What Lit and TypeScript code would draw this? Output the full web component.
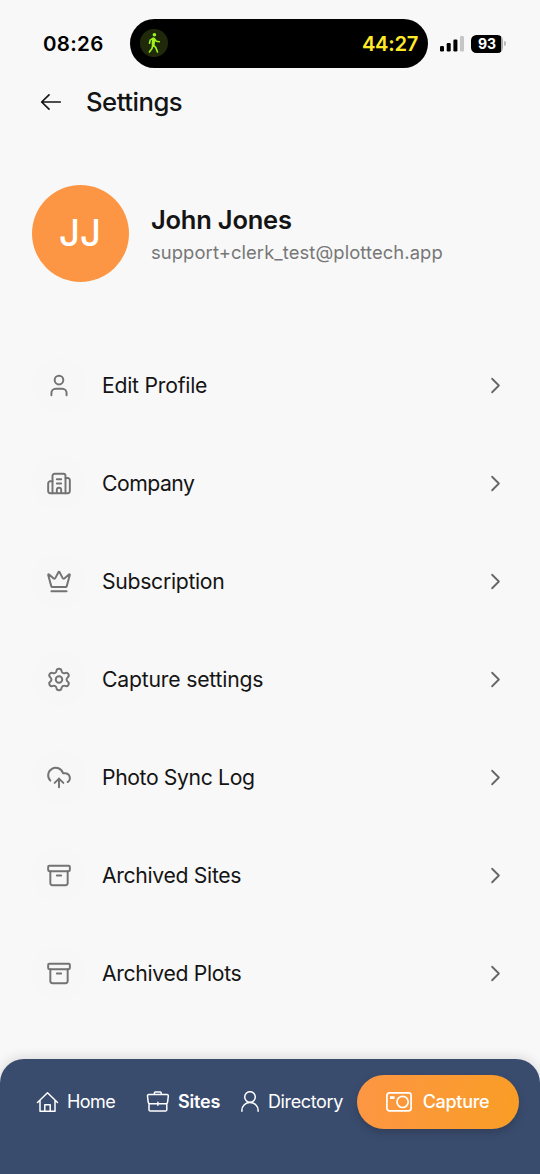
import { LitElement, html, css, svg } from "lit";
import { customElement } from "lit/decorators.js";

const icons: Record<string, unknown> = {
  user: svg`<path d="M19 21v-2a4 4 0 0 0-4-4H9a4 4 0 0 0-4 4v2"/><circle cx="12" cy="7" r="4"/>`,
  building: svg`<path d="M10 12h4M10 8h4M14 21v-3a2 2 0 0 0-4 0v3M6 10H4a2 2 0 0 0-2 2v7a2 2 0 0 0 2 2h16a2 2 0 0 0 2-2V9a2 2 0 0 0-2-2h-2"/><path d="M6 21V5a2 2 0 0 1 2-2h8a2 2 0 0 1 2 2v16"/>`,
  crown: svg`<path d="M11.562 3.266a.5.5 0 0 1 .876 0L15.39 8.87a1 1 0 0 0 1.516.294L21.183 5.5a.5.5 0 0 1 .798.519l-2.834 10.246a1 1 0 0 1-.956.734H5.81a1 1 0 0 1-.957-.734L2.02 6.02a.5.5 0 0 1 .798-.519l4.276 3.664a1 1 0 0 0 1.516-.294z"/><path d="M5 21h14"/>`,
  gear: svg`<path d="M9.671 4.136a2.34 2.34 0 0 1 4.659 0 2.34 2.34 0 0 0 3.319 1.915 2.34 2.34 0 0 1 2.33 4.033 2.34 2.34 0 0 0 0 3.831 2.34 2.34 0 0 1-2.33 4.033 2.34 2.34 0 0 0-3.319 1.915 2.34 2.34 0 0 1-4.659 0 2.34 2.34 0 0 0-3.32-1.915 2.34 2.34 0 0 1-2.33-4.033 2.34 2.34 0 0 0 0-3.831A2.34 2.34 0 0 1 6.35 6.051a2.34 2.34 0 0 0 3.319-1.915"/><circle cx="12" cy="12" r="3"/>`,
  cloud: svg`<path d="M12 13v8M4 14.899A7 7 0 1 1 15.71 8h1.79a4.5 4.5 0 0 1 2.5 8.242M8 17l4-4 4 4"/>`,
  archive: svg`<rect x="2" y="3" width="20" height="5" rx="1"/><path d="M4 8v11a2 2 0 0 0 2 2h12a2 2 0 0 0 2-2V8M10 12h4"/>`,
};

const rows = [
  { icon: "user", label: "Edit Profile", cls: "r1" },
  { icon: "building", label: "Company", cls: "r2" },
  { icon: "crown", label: "Subscription", cls: "r3" },
  { icon: "gear", label: "Capture settings", cls: "r4" },
  { icon: "cloud", label: "Photo Sync Log", cls: "r5" },
  { icon: "archive", label: "Archived Sites", cls: "r6" },
  { icon: "archive", label: "Archived Plots", cls: "r7" },
];

@customElement("app-root")
export class AppRoot extends LitElement {
  static styles = css`
    :host {
      display: flex;
      flex-direction: column;
      height: 1174px;
      width: 540px;
      overflow: hidden;
      background: #f8f8f8;
      color: #141414;
      font-family: Inter, "Liberation Sans", sans-serif;
      white-space: nowrap;
    }
    * { box-sizing: border-box; }
    svg { display: block; flex: none; fill: none; stroke: currentColor; stroke-linecap: round; stroke-linejoin: round; }
    .status { display: flex; align-items: center; height: 50px; margin-top: 18px; padding-left: 43px; color: #000; }
    .time { width: 87px; font-size: 20.5px; font-weight: 600; letter-spacing: 0.3px; }
    .island { display: flex; align-items: center; justify-content: space-between; width: 298px; height: 49px; padding: 0 10px; border-radius: 25px; background: #000; }
    .walk { display: grid; place-items: center; width: 28px; height: 28px; border-radius: 50%; background: #202a0b; color: #9cf51c; }
    .timer { color: #ffe928; font-size: 20.2px; font-weight: 600; letter-spacing: -0.3px; }
    .signal { margin: 1px 0 0 12px; }
    .battery { display: grid; place-items: center; margin: 1px 0 0 7px; width: 32px; height: 18px; border-radius: 5.5px; background: linear-gradient(90deg, #000 30.5px, #aaa 30.5px); color: #fff; font-size: 14px; line-height: 18px; font-weight: 700; }
    .cap { width: 2px; height: 5px; margin-left: 1px; border-radius: 0 2px 2px 0; background: #bbb; }
    .header { display: flex; align-items: center; height: 67px; padding-left: 40px; gap: 24px; }
    .title { font-size: 25.7px; font-weight: 500; letter-spacing: -0.5px; }
    .profile { display: flex; align-items: center; gap: 22px; margin-top: 50px; padding-left: 32px; height: 97px; }
    .avatar { display: grid; place-items: center; width: 97px; height: 97px; border-radius: 50%; background: #fd9644; color: #fff; font-size: 36.5px; font-weight: 500; padding: 0 1px 1px 0; }
    .who { padding-top: 4px; }
    .name { font-size: 25.5px; line-height: 34px; font-weight: 600; letter-spacing: -0.22px; }
    .mail { font-size: 18.4px; line-height: 31px; letter-spacing: 0.09px; color: #777; }
    .menu { display: flex; flex-direction: column; margin-top: 54px; }
    .row { display: flex; align-items: center; height: 98px; padding: 0 31px 0 32px; }
    .bubble { display: grid; place-items: center; width: 54px; height: 54px; margin-right: 16px; border-radius: 50%; background: #f7f7f7; color: #737373; }
    .label { flex: 1; font-size: 21.2px; }
    .r1 { letter-spacing: -0.24px; }
    .r2 { letter-spacing: -0.5px; }
    .r3 { letter-spacing: -0.3px; }
    .r4 { letter-spacing: -0.2px; }
    .r5 { letter-spacing: -0.38px; }
    .r6, .r7 { letter-spacing: -0.33px; }
    .chev { color: #666; }
    .nav { display: flex; margin-top: auto; height: 115px; border-radius: 24px 24px 0 0; background: #3a4c6e; box-shadow: 0 -2px 12px rgba(0,0,0,.12); color: #fff; padding: 16px 21px 0 36px; }
    .tab { display: flex; align-items: center; height: 53px; gap: 7px; font-size: 18px; }
    .home { width: 110px; letter-spacing: -0.6px; }
    .sites { width: 94px; gap: 8px; font-weight: 600; letter-spacing: -0.2px; }
    .dir { width: 117px; gap: 8px; letter-spacing: -0.38px; }
    .capture { display: flex; align-items: center; justify-content: center; gap: 11px; width: 162px; height: 54px; padding: 0 1px 1px 0; border-radius: 27px; background: linear-gradient(100deg, #fd9644, #f99d25); box-shadow: 0 4px 9px rgba(0,0,0,.18); font-size: 18px; font-weight: 500; letter-spacing: -0.3px; }
  `;

  render() {
    return html`
      <div class="status">
        <span class="time">08:26</span>
        <div class="island">
          <span class="walk">
            <svg width="16" height="22" viewBox="0 0 16 22" stroke-width="2">
              <circle cx="8.4" cy="2.8" r="1.8" fill="currentColor" stroke="none"/>
              <path d="M7.6 7l-.4 5.2" stroke-width="3.2"/>
              <path d="M7 6.4L4.2 8.2l-.7 3M8.6 7l1.7 2.3 3 .4M7.4 13l2.4 2.6 1.7 4.4M6.7 13l-.7 3.6L3.4 20" stroke-width="1.6"/>
            </svg>
          </span>
          <span class="timer">44:27</span>
        </div>
        <svg class="signal" width="24" height="16" viewBox="0 0 24 16">
          <g fill="#000" stroke="none"><rect x="0" y="10" width="4" height="5.5" rx="1.2"/><rect x="6.7" y="7" width="4" height="8.5" rx="1.2"/><rect x="13.4" y="3.5" width="4" height="12" rx="1.2"/></g>
          <rect x="20" y="0" width="4" height="15.5" rx="1.2" fill="#c6c6c6" stroke="none"/>
        </svg>
        <span class="battery">93</span><span class="cap"></span>
      </div>
      <div class="header">
        <svg width="22" height="18" viewBox="0 0 22 18" stroke-width="1.7"><path d="M20.2 9H1.7M9 1.8L1.7 9 9 16.2"/></svg>
        <span class="title">Settings</span>
      </div>
      <div class="profile">
        <span class="avatar">JJ</span>
        <div class="who">
          <div class="name">John Jones</div>
          <div class="mail">support+clerk_test@plottech.app</div>
        </div>
      </div>
      <div class="menu">
        ${rows.map((r) => html`
          <div class="row">
            <span class="bubble"><svg width="26" height="27" viewBox="0 0 24 24" stroke-width="1.8">${icons[r.icon]}</svg></span>
            <span class="label ${r.cls}">${r.label}</span>
            <svg class="chev" width="27" height="27" viewBox="0 0 24 24" stroke-width="1.6"><path d="M9 18l6-6-6-6"/></svg>
          </div>`)}
      </div>
      <div class="nav">
        <div class="tab home">
          <svg width="24" height="22" viewBox="0 0 24 22" stroke-width="1.5"><path d="M1.5 11.5L11.5 1.8l10 9.7M4 9.2v11h15v-11M8.8 20v-6.3h5.4V20"/></svg>
          <span>Home</span>
        </div>
        <div class="tab sites">
          <svg width="24" height="22" viewBox="0 0 24 22" stroke-width="1.5"><path d="M8.4 3.6V1.9Q8.4 1.1 9.2 1.1h5.2q.8 0 .8.8v1.7M2.8 3.6h18.2q1.4 0 1.3 1.4l-.7 6.1q-.2 1.6-1.6 1.6H3.8q-1.4 0-1.6-1.6L1.5 5Q1.4 3.6 2.8 3.6zM3 13v5.7q0 1.4 1.4 1.4h15q1.4 0 1.4-1.4V13M11.9 11.3v3"/></svg>
          <span>Sites</span>
        </div>
        <div class="tab dir">
          <svg width="20" height="22" viewBox="0 0 20 22" stroke-width="1.5"><circle cx="10" cy="6" r="5.3"/><path d="M1.9 20.2v-1a8.1 7.8 0 0 1 16.2 0v1"/></svg>
          <span>Directory</span>
        </div>
        <div class="capture">
          <svg width="26" height="20" viewBox="0 0 26 20" stroke-width="1.7"><rect x=".9" y=".9" width="24.2" height="18" rx="2.6"/><circle cx="16.6" cy="9.9" r="5.6"/><path d="M4 5.6h4.6" stroke-width="2.8" stroke-linecap="butt"/></svg>
          <span>Capture</span>
        </div>
      </div>`;
  }
}
